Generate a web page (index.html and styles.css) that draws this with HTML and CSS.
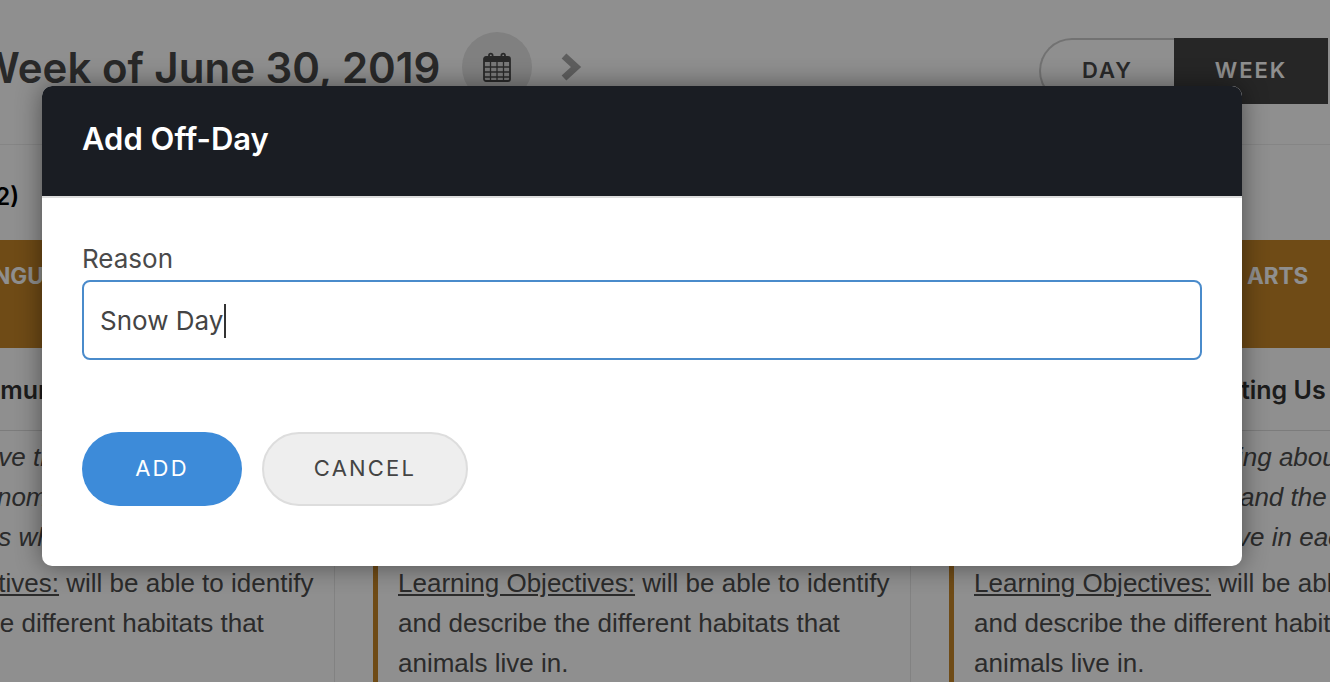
FILE: index.html
```html
<!DOCTYPE html>
<html lang="en">
<head>
    <meta charset="UTF-8">
    <title>Add Off-Day</title>
    <link rel="stylesheet" href="styles.css">
</head>
<body>
    <div class="page">
        <header class="topbar">
            <h1 class="week-title">Week of June 30, 2019</h1>
            <button class="cal-btn" aria-label="Pick a date">
                <svg width="30" height="30" viewBox="0 0 30 30">
                    <rect x="2" y="5" width="26" height="24" rx="2" fill="#d8d8d8" stroke="#4a4a4a" stroke-width="1.800"/>
                    <rect x="2" y="5" width="26" height="5" fill="#4a4a4a"/>
                    <path d="M2 15h26M2 20h26M2 25h26M8.500 10v18M15 10v18M21.500 10v18" stroke="#4a4a4a" stroke-width="1.300" fill="none"/>
                    <path d="M7 7V3.500a1.800 1.800 0 0 1 3.600 0V7M19.400 7V3.500a1.800 1.800 0 0 1 3.600 0V7" stroke="#4a4a4a" stroke-width="1.800" fill="none"/>
                </svg>
            </button>
            <svg class="next-icon" width="24" height="32" viewBox="0 0 24 32">
                <path d="M5 5l12 11L5 27" stroke="#a8a8a8" stroke-width="7" fill="none"/>
            </svg>
            <div class="view-tabs">
                <a class="view-tab">DAY</a>
                <a class="view-tab active">WEEK</a>
            </div>
        </header>

        <div class="subjects-row">Subjects (2)</div>

        <div class="columns">
            <section class="col">
                <div class="col-head col-head-first">ENGLISH LANGUAGE ARTS<br>FIRST TERM</div>
                <h2 class="lesson-title">Our Local Community</h2>
                <div class="lesson">
                    <p class="lesson-intro">Children will have the<br>hear about phenomena<br>the land animals who</p>
                    <p class="lesson-goal"><u>Learning Objectives:</u> will be able to identify and describe the different habitats that</p>
                </div>
            </section>
            <section class="col">
                <div class="col-head">ENGLISH LANGUAGE ARTS</div>
                <h2 class="lesson-title">Animal Habitats</h2>
                <div class="lesson">
                    <p class="lesson-intro">Children will start learning<br>other different habitats<br>fowl and animals that</p>
                    <p class="lesson-goal"><u>Learning Objectives:</u> will be able to identify and describe the different habitats that animals live in.</p>
                </div>
            </section>
            <section class="col">
                <div class="col-head">ENGLISH LANGUAGE ARTS</div>
                <h2 class="lesson-title">Useful Animals Protecting Us</h2>
                <div class="lesson">
                    <p class="lesson-intro">Children will start learning about<br>other different habitats and the creatures<br>fowl and animals that live in each</p>
                    <p class="lesson-goal"><u>Learning Objectives:</u> will be able to identify and describe the different habitats that animals live in.</p>
                </div>
            </section>
        </div>

        <div class="overlay">
            <div class="modal">
                <div class="modal-head">Add Off-Day</div>
                <div class="modal-body">
                    <label class="field-label">Reason</label>
                    <div class="field"><span class="field-value">Snow Day</span></div>
                    <div class="modal-actions">
                        <button class="btn btn-primary">ADD</button>
                        <button class="btn btn-cancel">CANCEL</button>
                    </div>
                </div>
            </div>
        </div>
    </div>
</body>
</html>
```

FILE: styles.css
```css
body {
    margin: 0;
    font-family: "Liberation Sans", Arial, sans-serif;
    background-color: #fff;
    color: #4d4d4d;
}
.page {
    position: relative;
    width: 1330px;
    height: 682px;
    overflow: hidden;
}
.topbar {
    display: flex;
    align-items: center;
    height: 134px;
    padding: 0 2px 10px 0;
    border-bottom: 1px solid #eee;
}
.week-title {
    margin: 0 22px 0 -23px;
    font-family: Inter, sans-serif;
    font-size: 42px;
    font-weight: 600;
    white-space: nowrap;
    color: #4a4a4a;
}
.cal-btn {
    display: flex;
    align-items: center;
    justify-content: center;
    width: 70px;
    height: 70px;
    padding: 0;
    border: none;
    border-radius: 50%;
    background-color: #e4e4e4;
}
.next-icon {
    margin-left: 27px;
}
.view-tabs {
    display: flex;
    margin: 8px 0 0 auto;
    height: 66px;
}
.view-tab {
    display: flex;
    align-items: center;
    justify-content: center;
    padding-bottom: 2px;
    box-sizing: border-box;
    font-family: Inter, sans-serif;
    font-size: 22px;
    font-weight: 600;
    letter-spacing: 2px;
}
.view-tab:first-child {
    width: 135px;
    border: 2px solid #ccc;
    border-right: none;
    border-radius: 33px 0 0 33px;
    color: #4a4a4a;
}
.view-tab.active {
    width: 154px;
    background-color: #444;
    color: #fff;
}
.subjects-row {
    display: flex;
    align-items: center;
    height: 95px;
    margin-left: -121px;
    padding-top: 8px;
    box-sizing: border-box;
    font-family: Inter, sans-serif;
    font-size: 24px;
    font-weight: 600;
    color: #000;
}
.columns {
    display: grid;
    grid-template-columns: repeat(3, 538px);
    column-gap: 38px;
    margin-left: -203px;
}
.col {
    border-right: 1px solid #e8e8e8;
}
.col-head {
    height: 108px;
    padding: 19px 0 0 35px;
    box-sizing: border-box;
    background-color: #c68628;
    font-family: Inter, sans-serif;
    font-size: 22.500px;
    font-weight: 700;
    word-spacing: 14px;
    line-height: 34px;
    color: #fff;
}
.col-head-first {
    padding-left: 49px;
}
.lesson-title {
    height: 83px;
    margin: 0;
    padding: 25px 0 0 25px;
    box-sizing: border-box;
    border-bottom: 1px solid #ddd;
    font-family: Inter, sans-serif;
    font-size: 25px;
    font-weight: 600;
    line-height: 34px;
    white-space: nowrap;
    color: #333;
}
.lesson {
    margin-top: 6px;
    padding: 0 15px 0 20px;
    border-left: 5px solid #c68628;
    font-size: 26px;
    line-height: 40px;
}
.lesson p {
    margin: 0 0 6px;
}
.lesson-intro {
    font-style: italic;
    white-space: nowrap;
}
.overlay {
    position: absolute;
    top: 0;
    left: 0;
    right: 0;
    bottom: 0;
    padding: 86px 0 0 42px;
    background-color: rgba(0, 0, 0, 0.44);
}
.modal {
    width: 1200px;
    height: 480px;
    overflow: hidden;
    background: #fff;
    border-radius: 10px;
    box-shadow: 0 0 26px rgba(0, 0, 0, 0.45);
}
.modal-head {
    height: 110px;
    padding: 0 40px;
    line-height: 106px;
    background-color: #1a1d23;
    border-bottom: 2px solid #ddd;
    font-family: Inter, sans-serif;
    font-size: 31px;
    font-weight: 600;
    color: #fff;
}
.modal-body {
    padding: 44px 40px 0;
}
.field-label {
    display: block;
    margin-bottom: 4px;
    font-family: Inter, sans-serif;
    font-size: 26px;
    line-height: 34px;
    color: #4a4a4a;
}
.field {
    display: flex;
    align-items: center;
    height: 80px;
    padding: 2px 16px 0;
    box-sizing: border-box;
    border: 2px solid #4a8bcb;
    border-radius: 8px;
    font-family: Inter, sans-serif;
    font-size: 26px;
    color: #444;
}
.field-value {
    padding-right: 1px;
    border-right: 2px solid #333;
    line-height: 34px;
}
.modal-actions {
    display: flex;
    gap: 20px;
    margin-top: 72px;
}
.btn {
    height: 74px;
    padding-bottom: 3px;
    border-radius: 37px;
    font-family: Inter, sans-serif;
    font-size: 22px;
    letter-spacing: 2.2px;
}
.btn-primary {
    width: 160px;
    border: none;
    background-color: #3d8bd9;
    color: #fff;
}
.btn-cancel {
    width: 206px;
    border: 2px solid #ddd;
    background-color: #eee;
    color: #444;
}
```
